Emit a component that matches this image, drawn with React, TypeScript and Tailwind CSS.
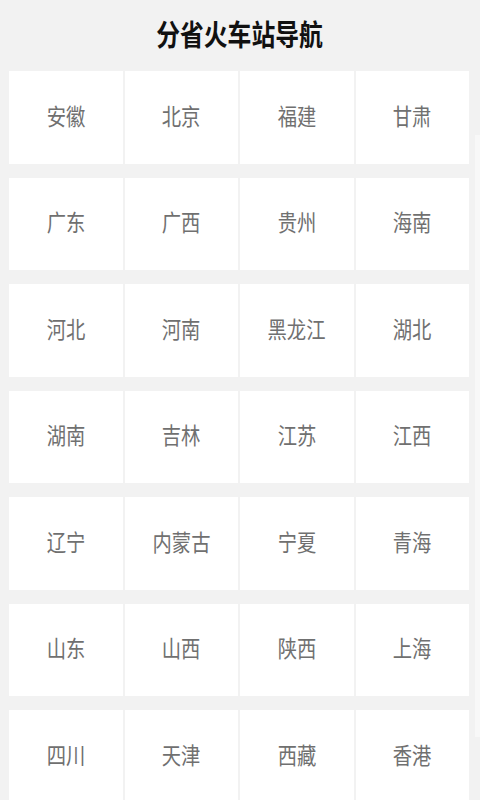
const provinces = [
  "安徽", "北京", "福建", "甘肃",
  "广东", "广西", "贵州", "海南",
  "河北", "河南", "黑龙江", "湖北",
  "湖南", "吉林", "江苏", "江西",
  "辽宁", "内蒙古", "宁夏", "青海",
  "山东", "山西", "陕西", "上海",
  "四川", "天津", "西藏", "香港",
];

export default function App() {
  return (
    <div
      className="relative h-[800px] w-[480px] overflow-hidden bg-[#f2f2f2]"
      style={{ fontFamily: '"Noto Sans CJK SC", "Noto Sans", sans-serif' }}
    >
      <h1 className="flex h-[66px] items-center justify-center pt-[1px] text-[29px] font-bold leading-none text-[#111]">
        <span className="inline-block scale-x-[0.82]">分省火车站导航</span>
      </h1>
      <div className="ml-[9px] mt-[5px] grid w-[460px] grid-cols-4 gap-x-[2px] gap-y-[14px]">
        {provinces.map((name) => (
          <div
            key={name}
            className="flex h-[92.5px] items-center justify-center bg-white pb-[4px] text-[23px] leading-none text-[#707070]"
          >
            <span className="inline-block scale-x-[0.84] whitespace-nowrap">{name}</span>
          </div>
        ))}
      </div>
      {/* faint scroll indicator */}
      <div className="absolute right-0 top-[135px] h-[602px] w-[5px] bg-[#f8f8f8]" />
    </div>
  );
}
